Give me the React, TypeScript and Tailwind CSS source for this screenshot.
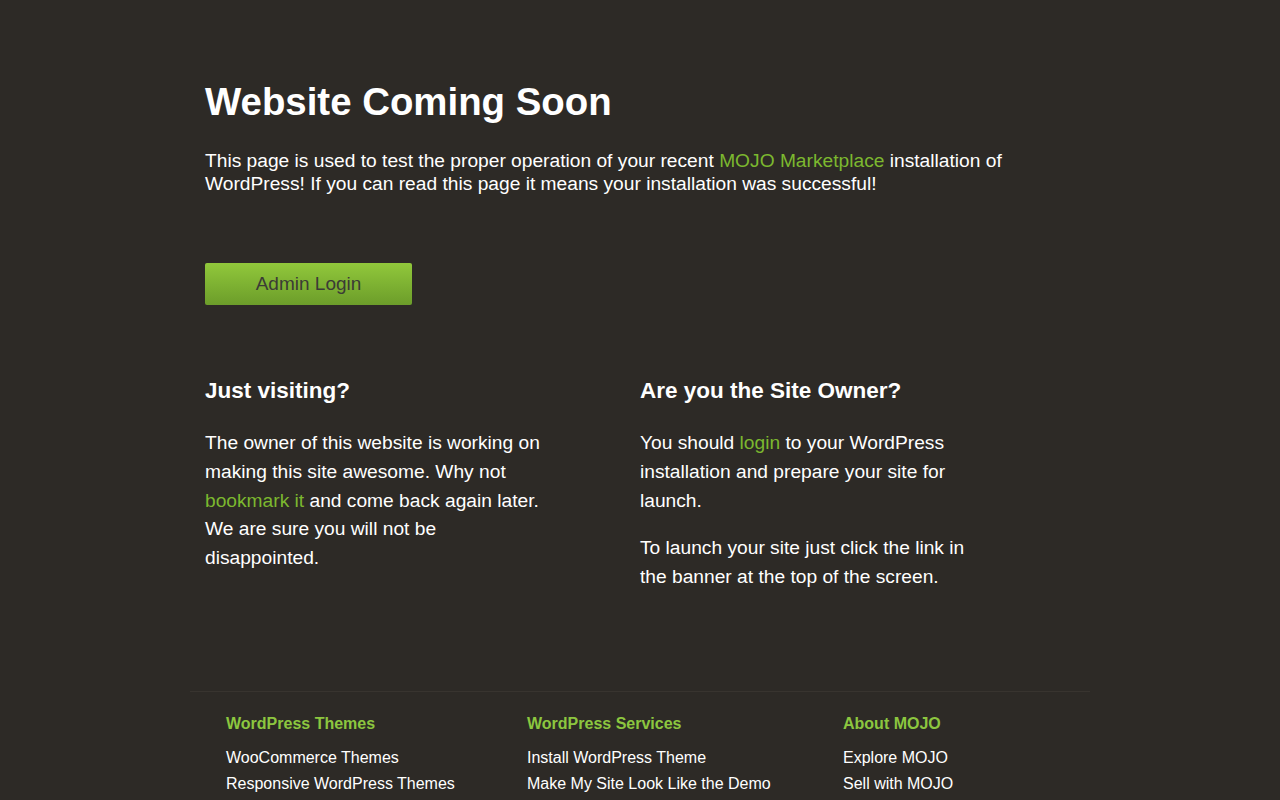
import React from "react";

const footerCols = [
  {
    title: "WordPress Themes",
    width: "w-[301px]",
    items: ["WooCommerce Themes", "Responsive WordPress Themes", "Premium WordPress Themes"],
  },
  {
    title: "WordPress Services",
    width: "w-[316px]",
    items: ["Install WordPress Theme", "Make My Site Look Like the Demo", "WordPress Security Scan"],
  },
  {
    title: "About MOJO",
    width: "w-[247px]",
    items: ["Explore MOJO", "Sell with MOJO", "Affiliate Program"],
  },
];

export default function App() {
  return (
    <div
      className="min-h-screen bg-[#2d2a26] text-white"
      style={{ fontFamily: '"Liberation Sans", Arial, sans-serif' }}
    >
      <div className="mx-auto w-[900px] px-[15px] pt-[80px]">
        <h1 className="text-[38.4px] font-bold leading-[44px]">Website Coming Soon</h1>
        <p className="mt-[25px] text-[19.2px] leading-[23px]">
          This page is used to test the proper operation of your recent{" "}
          <a className="text-[#7cb82f]">MOJO Marketplace</a> installation of WordPress! If you can
          read this page it means your installation was successful!
        </p>

        <div className="mt-[68px]">
          <a className="flex h-[42px] w-[207px] items-center justify-center rounded-[2px] bg-gradient-to-b from-[#91c83b] to-[#6c9d2a] text-[19px] text-[#3b3b36]">
            Admin Login
          </a>
        </div>

        <div className="mt-[73px] grid grid-cols-2">
          <div>
            <h2 className="text-[22.5px] font-bold leading-[26px]">Just visiting?</h2>
            <p className="mt-[25px] max-w-[345px] text-[19.2px] leading-[28.8px]">
              The owner of this website is working on making this site awesome. Why not{" "}
              <a className="text-[#7cb82f]">bookmark it</a> and come back again later. We are sure
              you will not be disappointed.
            </p>
          </div>
          <div>
            <h2 className="text-[22.5px] font-bold leading-[26px]">Are you the Site Owner?</h2>
            <p className="mt-[25px] max-w-[345px] text-[19.2px] leading-[28.8px]">
              You should <a className="text-[#7cb82f]">login</a> to your WordPress installation and
              prepare your site for launch.
            </p>
            <p className="mt-[19px] max-w-[345px] text-[19.2px] leading-[28.8px]">
              To launch your site just click the link in the banner at the top of the screen.
            </p>
          </div>
        </div>
      </div>

      <footer className="mx-auto mt-[99px] w-[900px] border-t border-[#38342f] pb-10 pl-[36px] pt-[23px]">
        <div className="flex">
          {footerCols.map((col) => (
            <div key={col.title} className={col.width}>
              <h3 className="text-[16px] font-bold leading-[18px] text-[#8cc63f]">{col.title}</h3>
              <ul className="mt-[12px]">
                {col.items.map((item) => (
                  <li key={item} className="text-[16px] leading-[26px] text-white">
                    {item}
                  </li>
                ))}
              </ul>
            </div>
          ))}
        </div>
      </footer>
    </div>
  );
}
